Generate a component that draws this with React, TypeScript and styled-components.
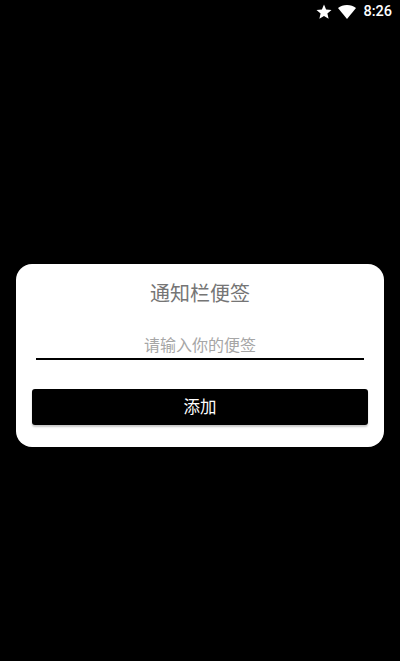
import React from 'react'
import styled, { createGlobalStyle } from 'styled-components'

const GlobalStyle = createGlobalStyle`
  html, body {
    margin: 0;
    padding: 0;
    background: #000;
    font-family: Roboto, "Noto Sans CJK SC", sans-serif;
  }
`

const Screen = styled.div`
  width: 400px;
  height: 661px;
  background: #000;
  display: flex;
  flex-direction: column;
  overflow: hidden;
`

const StatusBar = styled.div`
  height: 24px;
  display: flex;
  align-items: center;
  justify-content: flex-end;
  padding-right: 8px;
  color: #fff;
`

const StarIcon = styled.svg`
  width: 18px;
  height: 18px;
  margin-right: 5px;
`

const WifiIcon = styled.svg`
  width: 18px;
  height: 14px;
  margin-right: 7px;
`

const Time = styled.span`
  font-size: 14.5px;
  font-weight: 500;
  line-height: 24px;
`

const Main = styled.div`
  flex: 1;
  padding: 240px 16px 0;
`

const Card = styled.div`
  height: 183px;
  box-sizing: border-box;
  background: #fff;
  border-radius: 16px;
  padding: 0 16px;
  display: flex;
  flex-direction: column;
`

const Title = styled.div`
  margin-top: 16px;
  height: 28px;
  line-height: 28px;
  font-size: 20px;
  color: #757575;
  text-align: center;
`

const NoteInput = styled.input`
  display: block;
  width: 328px;
  height: 27px;
  margin: 25px 4px 0;
  padding: 0;
  box-sizing: border-box;
  border: 0;
  border-bottom: 2px solid #000;
  outline: none;
  background: transparent;
  font-family: inherit;
  font-size: 16px;
  text-align: center;
  &::placeholder {
    color: #a6a6a6;
    opacity: 1;
  }
`

const AddButton = styled.button`
  margin-top: 29px;
  height: 36px;
  width: 336px;
  border: 0;
  border-radius: 3px;
  background: #000;
  color: #fff;
  font-family: inherit;
  font-size: 16.5px;
  padding: 0 0 2px;
  box-shadow: 0 2px 2px rgba(0, 0, 0, 0.22);
`

export default function App() {
  return (
    <Screen>
      <GlobalStyle />
      <StatusBar>
        <StarIcon viewBox="0 0 24 24">
          <path fill="#fff" d="M12 17.27 18.18 21l-1.64-7.03L22 9.24l-7.19-.61L12 2 9.19 8.63 2 9.24l5.46 4.73L5.82 21z" />
        </StarIcon>
        <WifiIcon viewBox="0 0 18 14">
          <path fill="#fff" d="M9 14 0 3C2.400 1.100 5.500 0 9 0s6.600 1.100 9 3z" />
        </WifiIcon>
        <Time>8:26</Time>
      </StatusBar>
      <Main>
        <Card>
          <Title>通知栏便签</Title>
          <NoteInput placeholder="请输入你的便签" />
          <AddButton>添加</AddButton>
        </Card>
      </Main>
    </Screen>
  )
}
